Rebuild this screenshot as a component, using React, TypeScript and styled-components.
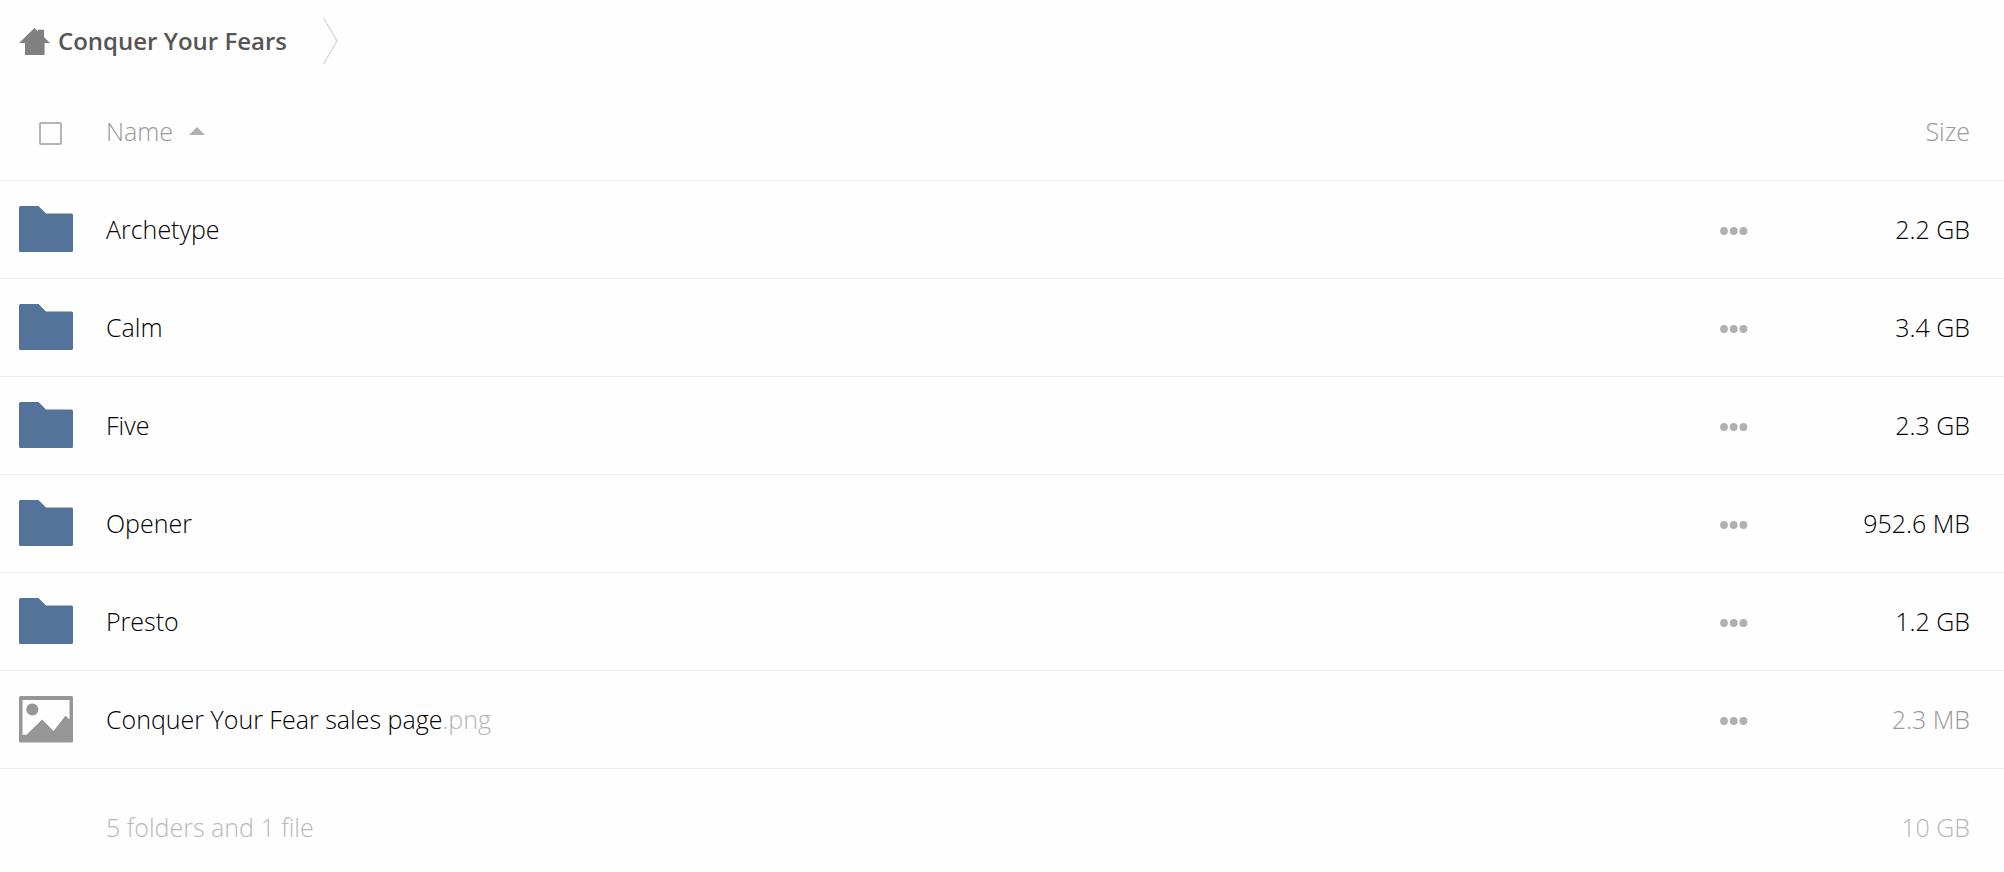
import React, { useState } from "react";
import styled, { createGlobalStyle } from "styled-components";

const GlobalStyle = createGlobalStyle`
  *, *::before, *::after { box-sizing: border-box; }
  body {
    margin: 0;
    background: #fefefe;
    color: #000;
    font-family: "Open Sans", "Noto Sans", sans-serif;
    font-size: 25px;
    font-weight: 300;
    line-height: 36px;
  }
`;

const Breadcrumbs = styled.nav`
  display: flex;
  align-items: center;
  gap: 36px;
  height: 82px;
  padding-left: 19px;
`;

const Crumb = styled.a`
  display: flex;
  align-items: center;
  gap: 8px;
  color: #555;
  font-size: 24px;
  font-weight: 600;
  text-decoration: none;
`;

const Icon = styled.svg`
  display: block;
  flex: none;
`;

const FileTable = styled.table`
  width: 100%;
  table-layout: fixed;
  border-spacing: 0;
`;

const Row = styled.tr`
  height: 98px;
`;

const HeadRow = styled.tr`
  height: 99px;
`;

const cellStyle = `
  padding: 0;
  font-weight: 300;
  text-align: left;
  vertical-align: middle;
`;

const HeadCell = styled.th<{ $width?: number }>`
  ${cellStyle}
  width: ${(p) => (p.$width ? `${p.$width}px` : "auto")};
  border-bottom: 1px solid #ededed;
  color: #999;
`;

const SizeHeadCell = styled(HeadCell)`
  padding-right: 34px;
  text-align: right;
`;

const Cell = styled.td`
  ${cellStyle}
  padding-bottom: 2px;
  border-bottom: 1px solid #ededed;
`;

const IconCell = styled(Cell)`
  padding-left: 18px;
`;

const SizeCell = styled(Cell)<{ $muted?: boolean }>`
  padding-right: 34px;
  color: ${(p) => (p.$muted ? "#999" : "#000")};
  text-align: right;
`;

const SummaryCell = styled.td<{ $end?: boolean }>`
  ${cellStyle}
  padding: 40px ${(p) => (p.$end ? 34 : 0)}px 24px 0;
  color: #b8b8b8;
  text-align: ${(p) => (p.$end ? "right" : "left")};
`;

const SelectAll = styled.input`
  display: block;
  width: 23px;
  height: 23px;
  margin: 4px 0 0 39px;
  appearance: none;
  border: 2px solid #b5b5b5;
  border-radius: 2px;
  background: #fefefe;
  &:checked { background: #b5b5b5; }
`;

const PlainButton = styled.button`
  display: inline-flex;
  align-items: center;
  gap: 16px;
  padding: 0;
  border: 0;
  background: none;
  color: inherit;
  font: inherit;
  cursor: pointer;
`;

const MoreButton = styled(PlainButton)`
  display: flex;
  padding: 12px 0 8px;
`;

const NameLink = styled.a`
  color: #000;
  text-decoration: none;
`;

const Extension = styled.span`
  color: #b5b5b5;
`;

const HomeIcon = () => (
  <Icon width="31" height="27" viewBox="0 0 31 27" fill="#808080" aria-hidden="true">
    <path d="M15.5 0 19 3.4V1.8h6v7.1L31 15h-5.4v12H6V15H0z" />
  </Icon>
);

const ChevronIcon = () => (
  <Icon width="15" height="46" viewBox="0 0 15 46" fill="none" stroke="#d0d0d0" strokeWidth="1.1" aria-hidden="true">
    <path d="M.5 0 14 23 .5 46" />
  </Icon>
);

const SortIcon = () => (
  <Icon width="16" height="8" viewBox="0 0 16 8" fill="#b0b0b0" aria-hidden="true">
    <path d="M8 0 16 8H0z" />
  </Icon>
);

const FolderIcon = () => (
  <Icon width="56" height="48" viewBox="0 0 56 48" fill="#54739b" aria-hidden="true">
    <path d="M2.5 1H20.500L28 8.500H53.500A1.500 1.500 0 0 1 55 10V45.500A1.500 1.500 0 0 1 53.500 47H2.500A1.500 1.500 0 0 1 1 45.500V2.500A1.500 1.500 0 0 1 2.500 1Z" />
  </Icon>
);

const ImageIcon = () => (
  <Icon width="56" height="48" viewBox="0 0 56 48" fill="#969696" aria-hidden="true">
    <path
      fillRule="evenodd"
      d="M2.500 1H53.500A1.500 1.500 0 0 1 55 2.500V46A1.500 1.500 0 0 1 53.500 47.500H2.500A1.500 1.500 0 0 1 1 46V2.500A1.500 1.500 0 0 1 2.500 1ZM4.500 5V39.800H8.500L24.200 24.500 35.500 36 47.500 20.800 51.500 24.500V5Z"
    />
    <circle cx="14.300" cy="14.600" r="6" />
  </Icon>
);

const MoreIcon = () => (
  <Icon width="28" height="8" viewBox="0 0 28 8" fill="#b0b0b0" aria-hidden="true">
    <circle cx="4" cy="4" r="3.900" />
    <circle cx="13.700" cy="4" r="3.900" />
    <circle cx="23.400" cy="4" r="3.900" />
  </Icon>
);

type Entry = { name: string; ext?: string; size: string };

const entries: Entry[] = [
  { name: "Archetype", size: "2.2 GB" },
  { name: "Calm", size: "3.4 GB" },
  { name: "Five", size: "2.3 GB" },
  { name: "Opener", size: "952.6 MB" },
  { name: "Presto", size: "1.2 GB" },
  { name: "Conquer Your Fear sales page", ext: ".png", size: "2.3 MB" },
];

export default function App() {
  const [allSelected, setAllSelected] = useState(false);

  return (
    <>
      <GlobalStyle />
      <Breadcrumbs aria-label="Breadcrumb">
        <Crumb href="#">
          <HomeIcon />
          Conquer Your Fears
        </Crumb>
        <ChevronIcon />
      </Breadcrumbs>
      <FileTable>
        <thead>
          <HeadRow>
            <HeadCell $width={106}>
              <SelectAll
                type="checkbox"
                aria-label="Select all"
                checked={allSelected}
                onChange={(e) => setAllSelected(e.target.checked)}
              />
            </HeadCell>
            <HeadCell aria-sort="ascending">
              <PlainButton type="button">
                Name
                <SortIcon />
              </PlainButton>
            </HeadCell>
            <HeadCell $width={84} aria-label="Actions" />
            <SizeHeadCell $width={200}>Size</SizeHeadCell>
          </HeadRow>
        </thead>
        <tbody>
          {entries.map((entry) => (
            <Row key={entry.name}>
              <IconCell>{entry.ext ? <ImageIcon /> : <FolderIcon />}</IconCell>
              <Cell>
                <NameLink href="#">
                  {entry.name}
                  {entry.ext && <Extension>{entry.ext}</Extension>}
                </NameLink>
              </Cell>
              <Cell>
                <MoreButton type="button" aria-label={`More actions for ${entry.name}`}>
                  <MoreIcon />
                </MoreButton>
              </Cell>
              <SizeCell $muted={Boolean(entry.ext)}>{entry.size}</SizeCell>
            </Row>
          ))}
        </tbody>
        <tfoot>
          <tr>
            <SummaryCell />
            <SummaryCell colSpan={2}>5 folders and 1 file</SummaryCell>
            <SummaryCell $end>10 GB</SummaryCell>
          </tr>
        </tfoot>
      </FileTable>
    </>
  );
}
